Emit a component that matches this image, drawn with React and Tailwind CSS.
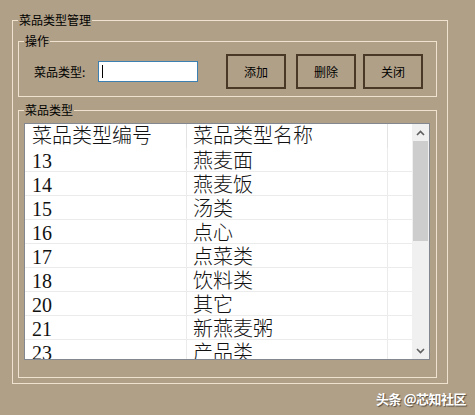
import React from 'react'

const rows = [
  ['13', '燕麦面'],
  ['14', '燕麦饭'],
  ['15', '汤类'],
  ['16', '点心'],
  ['17', '点菜类'],
  ['18', '饮料类'],
  ['20', '其它'],
  ['21', '新燕麦粥'],
  ['23', '产品类'],
]

function Chevron({ down }) {
  return (
    <svg width="9" height="6" viewBox="0 0 9 6">
      <polyline
        points={down ? '1,1 4.5,4.5 8,1' : '1,5 4.5,1.5 8,5'}
        fill="none"
        stroke="#5f5f5f"
        strokeWidth="1.6"
      />
    </svg>
  )
}

function Button({ children, className }) {
  return (
    <button className={`w-[60px] h-[35px] border-2 border-[#4a3826] bg-[#b1a088] text-[12px] text-black flex items-center justify-center ${className}`}>
      {children}
    </button>
  )
}

export default function App() {
  return (
    <div className="relative w-[475px] h-[415px] overflow-hidden bg-[#b1a088] text-black font-['Noto_Sans_CJK_SC',sans-serif]">
      <fieldset className="ml-[12px] mt-[13px] w-[436px] h-[371px] border border-[#efe3cf] px-[5px]">
        <legend className="px-[1px] text-[12px] leading-[14px]">菜品类型管理</legend>

        {/* 操作 */}
        <fieldset className="mt-[7px] w-[419px] h-[63px] border border-[#efe3cf] px-[5px]">
          <legend className="px-[1px] text-[12px] leading-[14px]">操作</legend>
          <div className="flex items-center pt-[6px]">
            <span className="ml-[10px] w-[64px] text-[12px] leading-[14px]">菜品类型:</span>
            <div className="w-[100px] h-[21px] border border-[#3c7fb1] bg-white flex items-center">
              <div className="ml-[3px] w-px h-[13px] bg-black" />
            </div>
            <Button className="ml-[28px]">添加</Button>
            <Button className="ml-[10px]">删除</Button>
            <Button className="ml-[7px]">关闭</Button>
          </div>
        </fieldset>

        {/* 菜品类型 */}
        <fieldset className="mt-[6px] w-[419px] h-[275px] border border-[#efe3cf] px-[5px]">
          <legend className="px-[1px] text-[12px] leading-[14px]">菜品类型</legend>
          <div className="mt-[6px] w-[406px] h-[237px] border border-[#828790] bg-white flex overflow-hidden">
            <div className="flex-1 overflow-hidden font-['Liberation_Serif','Noto_Sans_CJK_SC',serif] font-light text-[20px] text-[#111]">
              <div className="grid grid-cols-[162px_201px_1fr] h-[24px]">
                <div className="pl-[7px] leading-[24px] border-r border-[#e3e3e3]">菜品类型编号</div>
                <div className="pl-[6px] leading-[24px] border-r border-[#e3e3e3]">菜品类型名称</div>
                <div />
              </div>
              {rows.map(([id, name]) => (
                <div key={id} className="grid grid-cols-[162px_201px_1fr] h-[24px] border-b border-[#ebebeb]">
                  <div className="pl-[7px] leading-[24px] pt-[1px] border-r border-[#ebebeb]">{id}</div>
                  <div className="pl-[6px] leading-[24px] pt-[1px] border-r border-[#ebebeb]">{name}</div>
                  <div />
                </div>
              ))}
            </div>
            <div className="w-[17px] bg-[#f0f0f0] flex flex-col">
              <div className="h-[17px] flex items-center justify-center">
                <Chevron />
              </div>
              <div className="mx-[1px] h-[100px] bg-[#cdcdcd]" />
              <div className="flex-1" />
              <div className="h-[17px] flex items-center justify-center">
                <Chevron down />
              </div>
            </div>
          </div>
        </fieldset>
      </fieldset>

      <div className="absolute left-[376px] top-[389px] text-[13px] font-bold text-white tracking-[-0.5px] [text-shadow:1px_1px_1px_rgba(0,0,0,0.55)]">
        头条 @芯知社区
      </div>
    </div>
  )
}
